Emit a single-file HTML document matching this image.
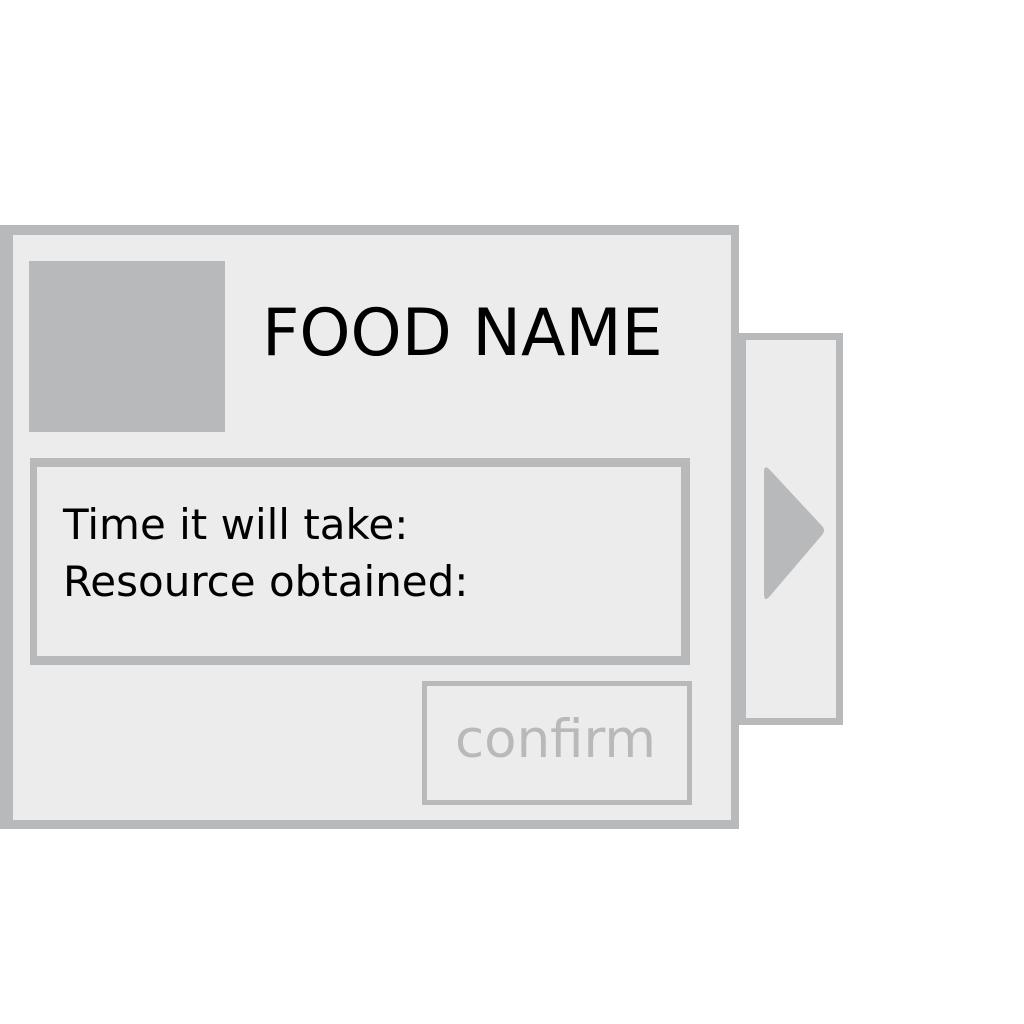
<!DOCTYPE html>
<html><head><style>
html,body{margin:0;padding:0;background:#fff;width:1024px;height:1024px;overflow:hidden;position:relative}
div{position:absolute;box-sizing:border-box}
.t{font-family:"DejaVu Sans","Liberation Sans",sans-serif;white-space:nowrap;line-height:1}
</style></head><body>
<div style="left:0;top:225px;width:739px;height:604px;background:#ececec;border:solid #b8b9bb;border-width:10px 8px 9px 13px"></div>
<div style="left:731px;top:333px;width:112px;height:392px;background:#ececec;border:7px solid #b8b9bb;border-left-width:15px"></div>
<svg style="position:absolute;left:760px;top:462px" width="70" height="143"><path d="M4 10 Q4 2 10 8 L62 64 Q66 68 62 73 L10 134 Q4 141 4 132 Z" fill="#b8b9bb"/></svg>
<div style="left:29px;top:261px;width:196px;height:171px;background:#b8b9bb"></div>
<div class="t" style="left:262px;top:301px;font-size:65px;color:#000">FOOD NAME</div>
<div style="left:30px;top:458px;width:660px;height:207px;border:solid #b8b9bb;border-width:9px 9px 9px 7px"></div>
<div class="t" style="left:63px;top:496px;font-size:42px;color:#000;line-height:57px">Time it will take:<br>Resource obtained:</div>
<div style="left:422px;top:681px;width:270px;height:124px;border:5px solid #b8b9bb"></div>
<div class="t" style="left:455px;top:713px;font-size:53px;color:#b8b9bb">confirm</div>
</body></html>
